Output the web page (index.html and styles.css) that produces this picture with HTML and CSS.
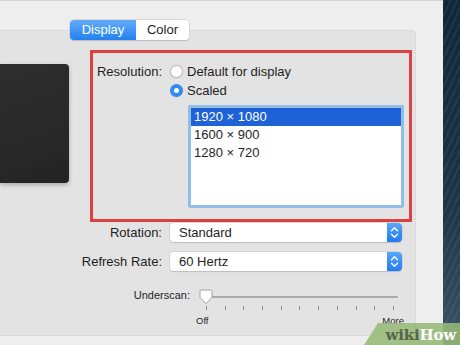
FILE: index.html
```html
<!DOCTYPE html>
<html lang="en">
<head>
    <meta charset="UTF-8">
    <meta name="viewport" content="width=device-width, initial-scale=1.0">
    <title>Displays</title>
    <link rel="stylesheet" href="styles.css">
</head>
<body>
<div class="screen">
    <div class="window">
        <div class="tabs">
            <span class="tab active">Display</span>
            <span class="tab">Color</span>
        </div>
        <div class="panel">
            <div class="monitor"></div>
            <div class="settings">
                <div class="highlight">
                    <div class="res-row">
                        <span class="label">Resolution:</span>
                        <div class="choices">
                            <div class="radio"><span class="circle"></span>Default for display</div>
                            <div class="radio on"><span class="circle"></span>Scaled</div>
                            <ul class="list">
                                <li class="selected">1920 × 1080</li>
                                <li>1600 × 900</li>
                                <li>1280 × 720</li>
                            </ul>
                        </div>
                    </div>
                </div>
                <div class="row first">
                    <span class="label">Rotation:</span>
                    <div class="popup">Standard
                        <span class="stepper">
                            <svg width="15" height="19" viewBox="0 0 15 19"><path d="M4.5 7.8 L7.5 4.8 L10.5 7.8 M4.5 11.2 L7.5 14.2 L10.5 11.2" fill="none" stroke="#fff" stroke-width="1.4" stroke-linecap="round" stroke-linejoin="round"/></svg>
                        </span>
                    </div>
                </div>
                <div class="row">
                    <span class="label">Refresh Rate:</span>
                    <div class="popup">60 Hertz
                        <span class="stepper">
                            <svg width="15" height="19" viewBox="0 0 15 19"><path d="M4.5 7.8 L7.5 4.8 L10.5 7.8 M4.5 11.2 L7.5 14.2 L10.5 11.2" fill="none" stroke="#fff" stroke-width="1.4" stroke-linecap="round" stroke-linejoin="round"/></svg>
                        </span>
                    </div>
                </div>
                <div class="scan-row">
                    <span class="scan-label">Underscan:</span>
                    <div class="slider">
                        <svg class="thumb" width="14" height="16" viewBox="0 0 14 16"><path d="M2.5 1 H11.5 Q13 1 13 2.5 V8.5 L7 14.5 L1 8.5 V2.5 Q1 1 2.5 1 Z" fill="#fdfdfd" stroke="#a2a2a2" stroke-width="1"/></svg>
                        <div class="track"></div>
                        <div class="ticks">
                            <i></i><i></i><i></i><i></i><i></i><i></i><i></i><i></i><i></i><i></i><i></i>
                        </div>
                        <div class="scale"><span>Off</span><span>More</span></div>
                    </div>
                </div>
            </div>
        </div>
    </div>
    <div class="desktop"></div>
    <div class="wikihow"><span class="wiki">wiki</span><span class="how">How</span></div>
</div>
</body>
</html>
```

FILE: styles.css
```css
body {
    margin: 0;
    font-family: "Liberation Sans", Arial, sans-serif;
    color: #1e1e1e;
}
.screen {
    position: relative;
    display: flex;
    width: 460px;
    height: 345px;
    overflow: hidden;
}
.window {
    width: 443px;
    height: 345px;
    box-sizing: border-box;
    background: #eeeeee;
    border-top: 1px solid #d3d3d3;
    padding-top: 19px;
}
.tabs {
    position: relative;
    z-index: 1;
    display: flex;
    margin-left: 70px;
    margin-bottom: -10px;
    height: 20px;
    width: 119px;
    border-radius: 4px;
    box-shadow: 0 0 0 0.5px #c4c4c4, 0 1px 1px rgba(0,0,0,0.18);
    background: #fff;
}
.tab {
    font-size: 13px;
    line-height: 20px;
    text-align: center;
    width: 53px;
    color: #1d1d1d;
}
.tab.active {
    width: 66px;
    color: #fff;
    border-radius: 4px 0 0 4px;
    background: linear-gradient(#63abf8, #2381f1);
}
.panel {
    display: flex;
    width: 416px;
    height: 306px;
    box-sizing: border-box;
    background: #e3e3e3;
    border: 1px solid #d9d9d9;
    border-left: none;
    border-radius: 0 5px 0 0;
    padding-top: 19px;
}
.monitor {
    width: 69px;
    height: 119px;
    margin-top: 14px;
    flex: none;
    border-radius: 0 4px 4px 0;
    background: linear-gradient(160deg, #2e2e2e, #242424);
    box-shadow: 0 2px 4px rgba(0,0,0,0.25);
}
.settings {
    margin-left: 7px;
    display: flex;
    flex-direction: column;
}
.highlight {
    margin-left: 14px;
    width: 322px;
    height: 172px;
    box-sizing: border-box;
    border: 3px solid #da4242;
    padding-top: 9px;
}
.res-row {
    display: grid;
    grid-template-columns: 69px 1fr;
    column-gap: 8px;
}
.label {
    font-size: 13px;
    line-height: 19px;
    text-align: right;
    white-space: nowrap;
}
.radio {
    display: flex;
    align-items: center;
    height: 19px;
    font-size: 13px;
    gap: 4px;
}
.circle {
    width: 13px;
    height: 13px;
    box-sizing: border-box;
    border-radius: 50%;
    background: #fff;
    border: 1px solid #b5b5b5;
    box-shadow: 0 0.5px 1px rgba(0,0,0,0.12);
}
.radio.on .circle {
    border: 4.5px solid #2f8af3;
    background: #fff;
}
.list {
    list-style: none;
    margin: 5px 0 0 18px;
    padding: 0;
    width: 216px;
    height: 103px;
    box-sizing: border-box;
    border: 3px solid #92bde9;
    border-radius: 2px;
    background: #fff;
}
.list li {
    font-size: 13px;
    line-height: 18px;
    padding-left: 3px;
}
.list li.selected {
    background: #1f61d6;
    color: #fff;
}
.row {
    display: grid;
    grid-template-columns: 86px 232px;
    column-gap: 8px;
    margin-top: 10px;
}
.row.first {
    margin-top: 1px;
}
.popup {
    position: relative;
    height: 19px;
    font-size: 13px;
    line-height: 19px;
    padding-left: 9px;
    background: #fff;
    border-radius: 4px;
    box-shadow: 0 0 0 0.5px #c8c8c8, 0 1px 1px rgba(0,0,0,0.22);
}
.stepper {
    position: absolute;
    right: 0;
    top: 0;
    width: 15px;
    height: 19px;
    border-radius: 0 4px 4px 0;
    background: linear-gradient(#5aa6f8, #1f7cf1);
}
.stepper svg {
    display: block;
}
.scan-row {
    display: grid;
    grid-template-columns: 114px 201px;
    column-gap: 9px;
    margin-top: 18px;
}
.scan-label {
    font-size: 11px;
    line-height: 13px;
    text-align: right;
}
.slider {
    position: relative;
    display: flex;
    flex-direction: column;
}
.thumb {
    position: absolute;
    left: 0;
    top: 0;
}
.track {
    margin: 7px 0 0 7px;
    width: 192px;
    height: 2px;
    background: #aaaaaa;
    border-radius: 1px;
}
.ticks {
    display: flex;
    justify-content: space-between;
    margin: 8px 0 0 7px;
    width: 188px;
}
.ticks i {
    width: 1px;
    height: 4px;
    background: #8a8a8a;
}
.scale {
    display: flex;
    justify-content: space-between;
    margin: 5px 0 0 -3px;
    width: 208px;
    font-size: 9.5px;
    line-height: 12px;
}
.desktop {
    flex: 1;
    background:
        repeating-linear-gradient(115deg, rgba(120,150,170,0.12) 0 2px, rgba(0,0,0,0) 2px 6px),
        linear-gradient(#11263a, #1d3547 60%, #3a5566);
}
.wikihow {
    position: absolute;
    right: 0;
    bottom: 0;
    width: 96px;
    height: 22px;
    box-sizing: border-box;
    padding-right: 4px;
    text-align: right;
    background: rgba(150, 185, 118, 0.88);
    clip-path: polygon(14px 0, 100% 0, 100% 100%, 0 100%);
    font-family: "DejaVu Serif", serif;
    font-weight: bold;
    font-size: 15px;
    line-height: 24px;
    letter-spacing: -0.2px;
}
.wiki {
    color: #56644c;
}
.how {
    color: #fff;
}
```
